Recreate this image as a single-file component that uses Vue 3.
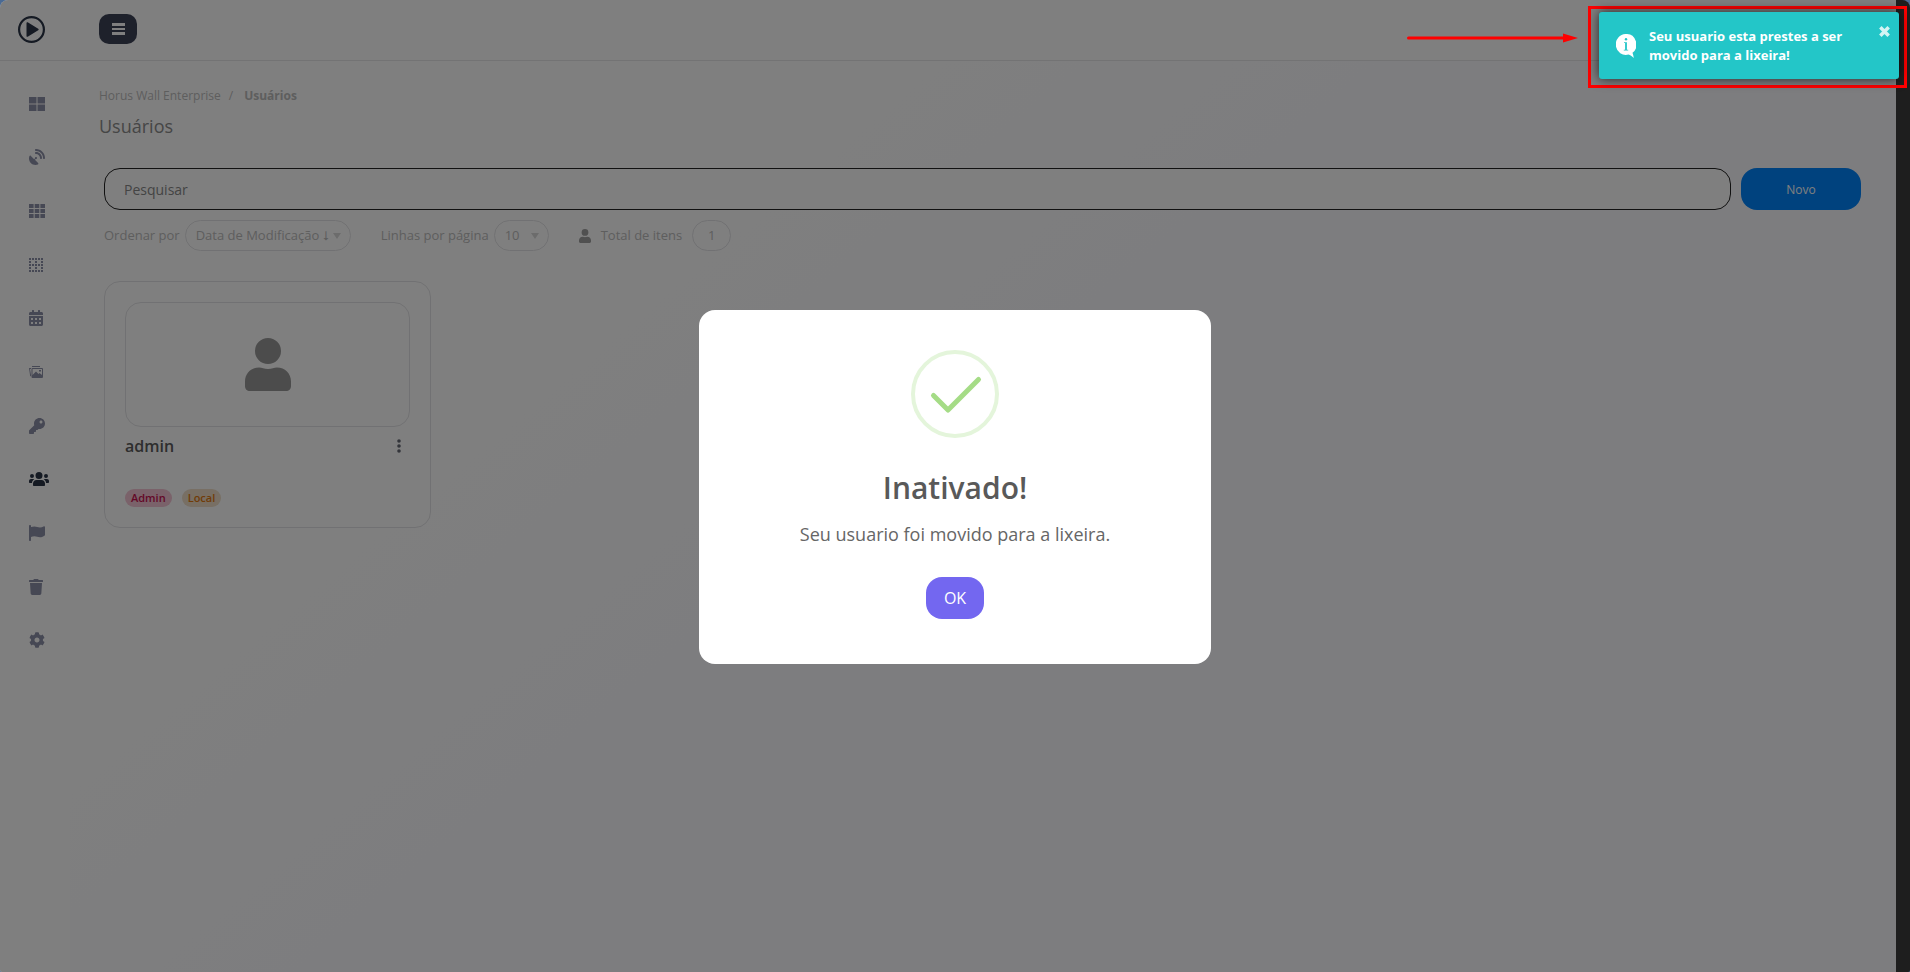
<template>
  <div class="shell">
    <div class="page">
      <header class="topbar">
        <a class="logo" href="#" aria-label="Horus Wall Enterprise">
          <svg viewBox="0 0 27 27" width="27" height="27">
            <circle cx="13.5" cy="13.5" r="12.4" fill="none" stroke="currentColor" stroke-width="2.2" />
            <path d="M8.500 7v13c0 .8.6 1 1.200.7l10.500-6.400c.6-.4.6-1.200 0-1.600l-10.500-6.400c-.6-.3-1.200-.1-1.200.7z" fill="currentColor" />
          </svg>
        </a>
        <button class="menu-btn" type="button" aria-label="Menu">
          <svg viewBox="0 0 13 12" width="13" height="12" fill="currentColor">
            <rect width="13" height="3" />
            <rect y="5" width="13" height="2" />
            <rect y="9" width="13" height="3" />
          </svg>
        </button>
      </header>

      <div class="body">
        <nav class="sidebar">
          <a
            v-for="item in menu"
            :key="item.name"
            href="#"
            :aria-label="item.name"
            :class="{ active: item.name === current }"
          >
            <svg :viewBox="`0 0 ${item.w} ${item.h}`" :width="item.width" :height="item.height">
              <path :d="item.d" fill="currentColor" fill-rule="evenodd" />
            </svg>
          </a>
        </nav>

        <main class="content">
          <div class="breadcrumb">
            <a href="#">Horus Wall Enterprise</a>
            <span>/</span>
            <strong>Usuários</strong>
          </div>
          <h1>Usuários</h1>

          <div class="listing">
            <div class="search-row">
              <input v-model="search" type="search" placeholder="Pesquisar" aria-label="Pesquisar" />
              <button class="new-btn" type="button">Novo</button>
            </div>

            <div class="filters">
              <div class="filter order">
                <label for="order">Ordenar por</label>
                <div class="select">
                  <select id="order" v-model="order">
                    <option value="modified">Data de Modificação ⭣</option>
                  </select>
                  <svg viewBox="0 0 8 6" width="8" height="6"><path d="M0 0h8L4 6z" fill="currentColor" /></svg>
                </div>
              </div>
              <div class="filter lines">
                <label for="lines">Linhas por página</label>
                <div class="select">
                  <select id="lines" v-model="lines">
                    <option>10</option>
                  </select>
                  <svg viewBox="0 0 8 6" width="8" height="6"><path d="M0 0h8L4 6z" fill="currentColor" /></svg>
                </div>
              </div>
              <div class="filter total">
                <svg viewBox="0 0 46 53" width="12" height="14"><path :d="userIcon" fill="currentColor" /></svg>
                <span>Total de itens</span>
                <span class="count">{{ users.length }}</span>
              </div>
            </div>

            <div class="cards">
              <article v-for="user in users" :key="user.name" class="card">
                <div class="avatar">
                  <svg viewBox="0 0 46 53" width="46" height="53"><path :d="userIcon" fill="currentColor" /></svg>
                </div>
                <div class="card-head">
                  <h2>{{ user.name }}</h2>
                  <button type="button" aria-label="Opções">
                    <svg viewBox="0 0 4 14" width="4" height="14" fill="currentColor">
                      <circle cx="2" cy="2" r="1.8" />
                      <circle cx="2" cy="7" r="1.8" />
                      <circle cx="2" cy="12" r="1.8" />
                    </svg>
                  </button>
                </div>
                <div class="tags">
                  <span v-for="tag in user.tags" :key="tag.label" class="tag" :class="tag.kind">{{ tag.label }}</span>
                </div>
              </article>
            </div>
          </div>
        </main>
      </div>
    </div>
    <div class="scroll-track"></div>

    <div v-if="modalOpen" class="overlay">
      <div class="modal" role="dialog" aria-labelledby="modal-title">
        <svg class="check" viewBox="0 0 88 88" width="88" height="88" fill="none">
          <circle cx="44" cy="44" r="42" stroke="#e4f5db" stroke-width="4" />
          <path d="M22.5 45.5L37 60L67.5 29.5" stroke="#a5dc86" stroke-width="5" stroke-linecap="round" stroke-linejoin="round" />
        </svg>
        <h2 id="modal-title">Inativado!</h2>
        <p>Seu usuario foi movido para a lixeira.</p>
        <button type="button" @click="modalOpen = false">OK</button>
      </div>
    </div>

    <div v-if="toastOpen" class="callout">
      <svg class="arrow" viewBox="0 0 172 10" width="172" height="10">
        <path d="M1.5 5H158" stroke="#f00" stroke-width="3" stroke-linecap="round" />
        <path d="M156 0.5L171 5L156 9.5z" fill="#f00" />
      </svg>
      <div class="frame">
        <div class="toast" role="status">
          <svg class="info" viewBox="0 0 20 24" width="20" height="24">
            <path d="M10 0a10 10.500 0 1 0 2.500 20.600c1.600.6 3.400 1.800 5.300 3.400c-.3-1.800-.7-3.600-1.300-5.200A10 10.500 0 0 0 10 0z" fill="#fff" />
            <circle cx="10" cy="5.200" r="1.200" fill="#23c6c8" />
            <path d="M8 8.300h2.900v7.400h1.300v.8H7.800v-.8h1.300V9.100H8z" fill="#23c6c8" />
          </svg>
          <p>Seu usuario esta prestes a ser movido para a lixeira!</p>
          <button type="button" aria-label="Fechar" @click="toastOpen = false">
            <svg viewBox="0 0 10 10" width="11" height="11">
              <path d="M1.200 1.200L8.800 8.800M8.800 1.200L1.200 8.800" stroke="currentColor" stroke-width="3.200" />
            </svg>
          </button>
        </div>
      </div>
    </div>
  </div>
</template>

<script setup>
import { ref } from 'vue'

const search = ref('')
const order = ref('modified')
const lines = ref('10')
const current = ref('Usuários')
const modalOpen = ref(true)
const toastOpen = ref(true)

const users = ref([
  {
    name: 'admin',
    tags: [
      { label: 'Admin', kind: 'pink' },
      { label: 'Local', kind: 'orange' }
    ]
  }
])

const userIcon =
  'M23 0a13 13 0 1 0 0 26a13 13 0 1 0 0-26zM14 29.500c3 0 5 1.500 9 1.500s6-1.500 9-1.500c8 0 14 6 14 14V48c0 3-2 5-5 5H5c-3 0-5-2-5-5v-4.500c0-8 6-14 14-14z'

// builds a path made of equal squares
function squares(list, w, h) {
  return list.map(([x, y]) => `M${x} ${y}h${w}v${h}h-${w}z`).join('')
}

const large = squares([[0, 0], [8.5, 0], [0, 7.5], [8.5, 7.5]], 7.5, 6.5)
const cells = squares(
  [0, 5, 10].flatMap(y => [0, 5.7, 11.4].map(x => [x, y])),
  4.6,
  4
)
const dots = squares(
  [0, 3, 6, 9, 12].flatMap(y =>
    [0, 3, 6, 9, 12]
      .filter(x => y % 6 === 0 || x % 6 === 0)
      .map(x => [x, y])
  ),
  2,
  2
)
const days = squares(
  [256, 384].flatMap(y => [64, 192, 320].map(x => [x, y])),
  64,
  64
)

const menu = [
  { name: 'Painel', w: 16, h: 14, width: 16, height: 14, d: large },
  {
    name: 'Transmissão',
    w: 512,
    h: 512,
    width: 16,
    height: 16,
    d: 'M192 32c0-17.700 14.300-32 32-32C383.100 0 512 128.900 512 288c0 17.700-14.300 32-32 32s-32-14.300-32-32C448 164.300 347.700 64 224 64c-17.700 0-32-14.300-32-32zM60.600 220.600L164.700 324.700l28.400-28.400c-.7-2.600-1.100-5.400-1.100-8.300c0-17.700 14.300-32 32-32s32 14.300 32 32s-14.300 32-32 32c-2.900 0-5.600-.4-8.300-1.100l-28.400 28.400L291.400 451.400c14.500 14.500 11.800 38.800-7.300 46.300C260.500 506.900 234.900 512 208 512C93.100 512 0 418.900 0 304c0-26.900 5.100-52.500 14.400-76.100c7.500-19 31.800-21.800 46.300-7.300zM224 96c106 0 192 86 192 192c0 17.700-14.300 32-32 32s-32-14.300-32-32c0-70.700-57.300-128-128-128c-17.700 0-32-14.300-32-32s14.300-32 32-32z'
  },
  { name: 'Grade', w: 16, h: 14, width: 16, height: 14, d: cells },
  { name: 'Layouts', w: 14, h: 14, width: 14, height: 14, d: dots },
  {
    name: 'Agenda',
    w: 448,
    h: 512,
    width: 14,
    height: 16,
    d: 'M0 464c0 26.500 21.500 48 48 48h352c26.500 0 48-21.500 48-48V192H0zM400 64h-48V16c0-9-7-16-16-16h-32c-9 0-16 7-16 16v48H160V16c0-9-7-16-16-16h-32c-9 0-16 7-16 16v48H48C21 64 0 85 0 112v48h448v-48c0-27-21-48-48-48z' + days
  },
  {
    name: 'Mídias',
    w: 28,
    h: 24,
    width: 14,
    height: 12,
    d: 'M0 4h4v2H2l2 12v3a3 3 0 0 1-2-3zM6 0h16v2H6zM7 4h19a2 2 0 0 1 2 2v16a2 2 0 0 1-2 2H7a2 2 0 0 1-2-2V6a2 2 0 0 1 2-2zM7 6v12l7-7l5 5l2-2l5 4V6zM20 8h4v3h-4z'
  },
  {
    name: 'Chaves',
    w: 512,
    h: 512,
    width: 16,
    height: 16,
    d: 'M512 176C512 273.200 433.200 352 336 352c-11.200 0-22.200-1-32.800-3l-24 27A24 24 0 0 1 261.200 384H224v40c0 13.300-10.700 24-24 24h-40v40c0 13.300-10.700 24-24 24H24c-13.300 0-24-10.700-24-24v-78c0-6.400 2.500-12.500 7-17l161.800-161.800C163.100 213.800 160 195.300 160 176 160 78.800 238.800 0 336 0 433.500 0 512 78.500 512 176zM336 128c0 26.500 21.500 48 48 48s48-21.500 48-48-21.500-48-48-48-48 21.500-48 48z'
  },
  {
    name: 'Usuários',
    w: 20,
    h: 14,
    width: 20,
    height: 14,
    d: 'M10 0a3.500 3.500 0 1 0 0 7a3.500 3.500 0 1 0 0-7zM3 2a2 2 0 1 0 0 4a2 2 0 1 0 0-4zM17 2a2 2 0 1 0 0 4a2 2 0 1 0 0-4zM7.500 8h5c2 0 3.500 1.600 3.500 3.500V13c0 .6-.4 1-1 1H5c-.6 0-1-.4-1-1v-1.500C4 9.600 5.500 8 7.500 8zM2 7h2.500l.8.300C3.800 8.200 3 9.500 3 11H1c-.6 0-1-.4-1-1V9c0-1.100.9-2 2-2zM18 7h-2.500l-.8.300C16.200 8.200 17 9.500 17 11h2c.6 0 1-.4 1-1V9c0-1.100-.9-2-2-2z'
  },
  {
    name: 'Relatórios',
    w: 512,
    h: 512,
    width: 16,
    height: 16,
    d: 'M64 32C64 14.300 50 0 32 0S0 14.300 0 32V490c0 12 10 22 22 22h20c12 0 22-10 22-22V384c30-14 70-24 110-24c66 0 110 32 176 32c48 0 90-16 130-40c20-10 32-22 32-44V72c0-24-24-38-46-28c-38 18-78 32-114 32c-66 0-110-32-176-32c-40 0-78 8-112 22z'
  },
  {
    name: 'Lixeira',
    w: 448,
    h: 512,
    width: 14,
    height: 16,
    d: 'M432 32H312l-9.400-18.700A24 24 0 0 0 281.100 0H166.800a23.700 23.700 0 0 0-21.400 13.300L136 32H16A16 16 0 0 0 0 48v32a16 16 0 0 0 16 16h416a16 16 0 0 0 16-16V48a16 16 0 0 0-16-16zM53.200 467a48 48 0 0 0 47.900 45h245.800a48 48 0 0 0 47.900-45L416 128H32z'
  },
  {
    name: 'Configurações',
    w: 512,
    h: 512,
    width: 16,
    height: 16,
    d: 'M487.400 315.700l-42.600-24.600c4.300-23.200 4.300-47 0-70.200l42.600-24.600c4.900-2.800 7.100-8.600 5.500-14-11.100-35.600-30-67.800-54.700-94.600-3.800-4.100-10-5.100-14.800-2.300L380.800 110c-17.900-15.400-38.500-27.300-60.800-35.100V25.800c0-5.600-3.900-10.500-9.400-11.700-36.700-8.200-74.300-7.800-109.200 0-5.500 1.200-9.400 6.100-9.400 11.700V75c-22.200 7.900-42.800 19.800-60.800 35.100L88.700 85.500c-4.900-2.800-11-1.900-14.800 2.300-24.700 26.700-43.600 58.900-54.700 94.600-1.700 5.400.6 11.200 5.500 14L67.300 221c-4.300 23.200-4.300 47 0 70.200l-42.600 24.600c-4.900 2.800-7.100 8.600-5.500 14 11.100 35.600 30 67.800 54.700 94.600 3.800 4.100 10 5.100 14.800 2.300l42.600-24.600c17.900 15.400 38.500 27.300 60.800 35.100v49.200c0 5.600 3.900 10.500 9.400 11.700 36.700 8.200 74.300 7.800 109.200 0 5.500-1.200 9.400-6.100 9.400-11.700v-49.200c22.200-7.900 42.800-19.800 60.800-35.100l42.600 24.600c4.900 2.800 11 1.900 14.800-2.300 24.700-26.700 43.600-58.900 54.700-94.600 1.500-5.500-.7-11.300-5.600-14.100zM256 336c-44.100 0-80-35.900-80-80s35.900-80 80-80 80 35.900 80 80-35.900 80-80 80z'
  }
]
</script>

<style>
body {
  background: #4a6a94;
}
</style>

<style scoped>
.shell {
  position: relative;
  display: flex;
  min-height: 100vh;
  overflow: hidden;
  border-radius: 8px 8px 2px 2px;
  font-family: 'Open Sans', 'Noto Sans', sans-serif;
  font-size: 13px;
}

.shell * {
  box-sizing: border-box;
}

button,
input,
select {
  font-family: inherit;
}

button {
  padding: 0;
  border: none;
  cursor: pointer;
}

svg {
  display: block;
  flex: none;
}

.page {
  flex: 1;
  display: flex;
  flex-direction: column;
  background: #fff;
}

.scroll-track {
  width: 14px;
  background: #3c3c3c;
}

.topbar {
  display: flex;
  align-items: center;
  gap: 54px;
  height: 61px;
  padding: 0 18px 2px;
  border-bottom: 1px solid #e6e6e9;
}

.logo {
  color: #2a3547;
}

.menu-btn {
  display: flex;
  align-items: center;
  justify-content: center;
  width: 38px;
  height: 30px;
  border-radius: 10px;
  background: #3c4257;
  color: #fff;
}

.body {
  flex: 1;
  display: flex;
}

.sidebar {
  display: grid;
  grid-auto-rows: 1fr;
  width: 70px;
  height: 606px;
  padding-top: 16px;
}

.sidebar a {
  display: flex;
  align-items: center;
  padding-left: 29px;
  color: #8d90a8;
}

.sidebar a.active {
  color: #2a3547;
}

.content {
  flex: 1;
  padding: 25px 29px;
  background: linear-gradient(140deg, #fff 25%, #fbfbff 45%);
}

.breadcrumb {
  display: flex;
  gap: 8px;
  font-size: 12px;
  line-height: 20px;
  color: #bcbcbc;
}

.breadcrumb a {
  color: inherit;
  text-decoration: none;
}

.breadcrumb strong {
  padding-left: 3px;
}

h1 {
  margin: 7px 0 0;
  font-size: 18px;
  font-weight: 400;
  line-height: 26px;
  color: #8c8c8c;
}

.listing {
  padding: 29px 6px 0 5px;
}

.search-row {
  display: flex;
  gap: 10px;
}

.search-row input {
  flex: 1;
  height: 42px;
  padding: 0 19px;
  border: 1px solid #222;
  border-radius: 16px;
  outline: none;
  background: #fff;
  font-size: 14px;
  color: #444;
}

.search-row input::placeholder {
  color: #888;
}

.new-btn {
  width: 120px;
  height: 42px;
  border-radius: 16px;
  background: #0084fc;
  font-size: 12px;
  color: #fff;
}

.filters {
  display: flex;
  gap: 30px;
  margin-top: 10px;
  color: #bcbcbc;
}

.filter {
  display: flex;
  align-items: center;
  gap: 5px;
}

.select {
  position: relative;
}

.select select {
  height: 31px;
  padding: 0 20px 1px 10px;
  border: 1px solid #e3e3e6;
  border-radius: 16px;
  appearance: none;
  background: transparent;
  font-size: 13px;
  color: #bcbcbc;
}

.lines .select select {
  padding-right: 28px;
}

.select svg {
  position: absolute;
  top: 13px;
  right: 10px;
  color: #d8d8d8;
}

.filter label,
.total span {
  padding-bottom: 1px;
}

.total {
  gap: 10px;
}

.total svg {
  color: #a0a0a0;
}

.count {
  width: 39px;
  height: 31px;
  border: 1px solid #e3e3e6;
  border-radius: 16px;
  line-height: 29px;
  text-align: center;
}

.cards {
  display: flex;
  margin-top: 30px;
}

.card {
  width: 327px;
  padding: 20px;
  border: 1px solid #e3e3e6;
  border-radius: 16px;
  background: #fff;
}

.avatar {
  display: flex;
  align-items: center;
  justify-content: center;
  height: 125px;
  border: 1px solid #e3e3e6;
  border-radius: 16px;
  color: #989898;
}

.card-head {
  display: flex;
  align-items: center;
  justify-content: space-between;
  height: 38px;
}

.card-head h2 {
  margin: 0;
  font-size: 16px;
  font-weight: 600;
  color: #5c5c5c;
}

.card-head button {
  padding: 4px 9px;
  background: none;
  color: #666a75;
}

.tags {
  display: flex;
  gap: 10px;
  margin-top: 24px;
}

.tag {
  padding: 0 6px;
  border-radius: 9px;
  font-size: 11px;
  font-weight: 600;
  line-height: 18px;
}

.pink {
  background: #f4c4d4;
  color: #c81050;
}

.orange {
  background: #f0dfc8;
  color: #e07810;
}

.overlay {
  position: absolute;
  inset: 0;
  display: flex;
  align-items: center;
  justify-content: center;
  padding-top: 2px;
  background: rgba(0, 0, 0, 0.5);
}

.modal {
  display: flex;
  flex-direction: column;
  align-items: center;
  width: 512px;
  padding: 40px 20px 45px;
  border-radius: 16px;
  background: #fff;
}

.modal h2 {
  margin: 30px 0 0;
  font-size: 30px;
  font-weight: 600;
  line-height: 40px;
  color: #595959;
}

.modal p {
  margin: 12px 0 0;
  font-size: 18px;
  line-height: 28px;
  color: #666;
}

.modal button {
  width: 58px;
  height: 42px;
  margin-top: 29px;
  border-radius: 16px;
  background: #7367f0;
  font-size: 16px;
  font-weight: 500;
  color: #fff;
}

.callout {
  position: absolute;
  top: 6px;
  right: 3px;
  display: flex;
  gap: 9px;
}

.arrow {
  margin-top: 27px;
}

.frame {
  padding: 3px 5px 6px 8px;
  border: 3px solid #f00;
}

.toast {
  display: flex;
  align-items: center;
  gap: 13px;
  width: 300px;
  height: 67px;
  padding: 0 9px 0 17px;
  border-radius: 3px;
  background: #23c6c8;
  box-shadow: 0 0 12px rgba(0, 0, 0, 0.7);
  color: #fff;
}

.toast p {
  flex: 1;
  margin: 0;
  font-size: 13px;
  font-weight: 700;
  line-height: 19px;
}

.toast button {
  align-self: flex-start;
  margin-top: 14px;
  background: none;
  color: #d3f4f4;
}
</style>
